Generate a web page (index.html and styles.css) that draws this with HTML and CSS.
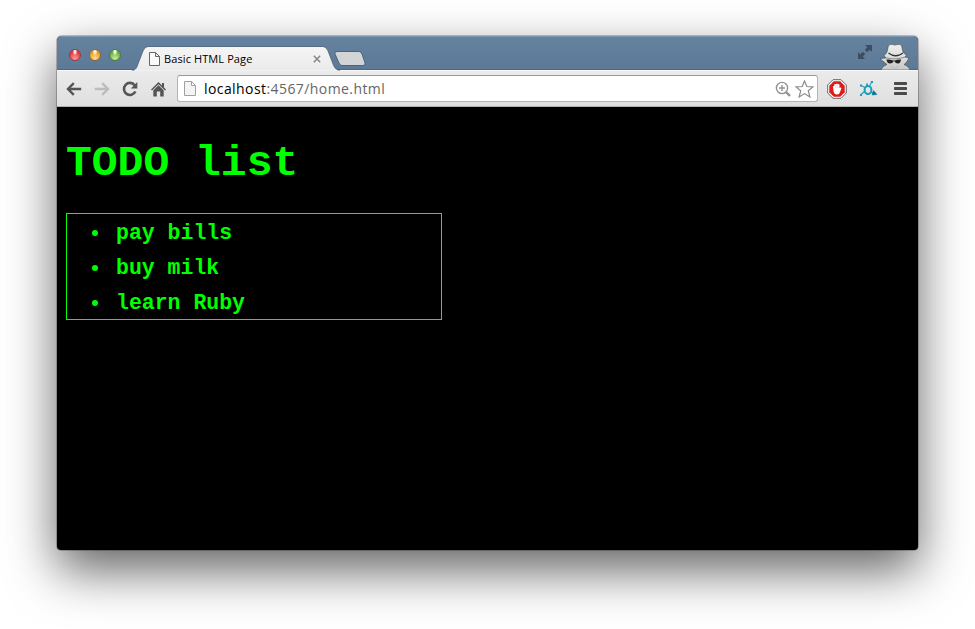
FILE: index.html
```html
<!DOCTYPE html>
<html lang="en">
<head>
<meta charset="utf-8">
<title>Basic HTML Page</title>
<link rel="stylesheet" href="styles.css">
</head>
<body>
<div class="window">
  <header class="tabstrip">
    <div class="lights"><i class="light red"></i><i class="light amber"></i><i class="light green"></i></div>
    <div class="tab">
      <svg class="tab-shape" width="208" height="25" viewBox="0 0 208 25"><defs><linearGradient id="tabfill" x2="0" y2="1"><stop stop-color="#f5f5f5"/><stop offset="1" stop-color="#ebebeb"/></linearGradient></defs><path d="M0 24.5C4 24 5 21 6 18L11 5Q13 .8 16 .8H191Q194 .8 196 5L201 18Q203 24 208 24.5Z" fill="url(#tabfill)"/><path d="M0 24.5C4 24 5 21 6 18L11 5Q13 .5 16 .5H191Q194 .5 196 5L201 18Q203 24 208 24.5" fill="none" stroke="#3f5369" stroke-opacity=".65"/></svg>
      <svg class="tab-icon" width="11" height="14" viewBox="0 0 11 14" fill="#fafafa" stroke="#666"><path d="M.5.5H6.5L10.5 4.5V13.5H.5ZM6.5.5V4.5H10.5"/></svg>
      <span class="tab-title">Basic HTML Page</span>
      <svg class="close" width="8" height="8" viewBox="0 0 8 8" stroke="#858585" stroke-width="1.5"><path d="M.8.8L7.2 7.2M7.2.8L.8 7.2"/></svg>
    </div>
    <svg class="newtab" width="32" height="15" viewBox="0 0 32 15"><path d="M3 .5H25Q27 .5 28 3L31 12Q31.6 14.5 29 14.5H8Q6 14.5 5 12L1 3Q0 .5 3 .5Z" fill="#d2d4d6" stroke="#4d647d"/></svg>
    <svg class="expand" width="16" height="16" viewBox="0 0 16 16"><path d="M8 1H15V8L12.8 5.8L10 8.2L7.8 6L10.2 3.2ZM1 8L3.2 10.2L6 7.8L8.2 10L5.8 12.8L8 15H1Z" fill="#3c4e61"/></svg>
    <svg class="spy" width="34" height="28" viewBox="0 0 34 28"><defs><linearGradient id="spyfill" x2="0" y2="1"><stop stop-color="#f0f0f0"/><stop offset="1" stop-color="#c8c8c8"/></linearGradient></defs><path d="M3 28Q4 24 9 22.5L7 21L2 16.5L8 16L6 13.5Q8 12 9 10L10.5 3.5Q12 1.5 17 3Q22 1.5 23.5 3.5L25 10Q26.5 12 28.5 13L27 15L31 16L28 21L26 22.5Q31 24 32 28Z" fill="url(#spyfill)" stroke="#3d4045" stroke-opacity=".55"/><path d="M10.5 11Q17.5 16.5 25 11" fill="none" stroke="#333" stroke-width="1.3"/><path d="M7 15.5Q17 18.5 27 15" fill="none" stroke="#777" stroke-width=".8"/><path d="M8.5 17.5Q12 17 15 18.5H17Q20 17 23 17.5Q22.5 21.5 20 21.5Q17.5 21.5 16.5 19.3H15.7Q14.5 21.5 12 21.5Q9 21.5 8.5 17.5Z" fill="#222"/><path d="M12 24L16.5 26.5L21 24" fill="none" stroke="#bbb"/></svg>
  </header>
  <nav class="toolbar">
    <svg class="back" width="16" height="14" viewBox="0 0 16 14" fill="none" stroke="#555" stroke-width="2.4"><path d="M15.2 7H2M7.8 1.2L2 7L7.8 12.8"/></svg>
    <svg class="forward" width="16" height="14" viewBox="0 0 16 14" fill="none" stroke="#bcbcbc" stroke-width="2.4"><path d="M.8 7H14M8.2 1.2L14 7L8.2 12.8"/></svg>
    <svg class="reload" width="16" height="16" viewBox="0 0 16 16"><path d="M12.7 4.2A6 6 0 1 0 13.4 10.5" fill="none" stroke="#555" stroke-width="2.6"/><path d="M15.3 1V7.5H8.8Z" fill="#555"/></svg>
    <svg class="home" width="15" height="16" viewBox="0 0 15 16" fill="#555"><path d="M7.5 1L11 4.5V2H13V6.5L15 8.5L14 9.5L7.5 3.2L1 9.5L0 8.5Z"/><path d="M2.3 9.2L7.5 4.2L12.7 9.2V15.5H9.2V10.5H5.8V15.5H2.3Z"/></svg>
    <div class="omnibox">
      <svg class="page-icon" width="12" height="15" viewBox="0 0 12 15" fill="#f4f4f4" stroke="#a0a0a0"><path d="M.5.5H7.5L11.5 4.5V14.5H.5ZM7.5.5V4.5H11.5"/></svg>
      <span class="url"><b>localhost</b>:4567/home.html</span>
      <svg class="magnify" width="16" height="16" viewBox="0 0 16 16" fill="none" stroke="#929292"><circle cx="7" cy="7" r="5.6" stroke-width="1.4"/><path d="M4 7H10M7 4V10" stroke-width="1.4"/><path d="M11 11L15 15" stroke-width="2.4"/></svg>
      <svg class="star" width="19" height="18" viewBox="0 0 19 18" fill="#fff" stroke="#8a8a8a" stroke-width="1.2"><path d="M9.5 1L11.8 6.5L18 6.9L13.3 10.8L14.9 17L9.5 13.6L4.1 17L5.7 10.8L1 6.9L7.2 6.5Z"/></svg>
    </div>
    <svg class="block" width="20" height="20" viewBox="0 0 20 20"><path d="M6 .7H14L19.3 6V14L14 19.3H6L.7 14V6Z" fill="#fff" stroke="#666"/><path d="M6.7 2.3H13.3L17.7 6.7V13.3L13.3 17.7H6.7L2.3 13.3V6.7Z" fill="#dd1c1a"/><path d="M6 8Q6 6.5 7.2 7V5.5Q8.2 4.5 9 5.5Q9.8 3.5 10.8 5.2Q12 4.5 12.5 6V9Q14 7.8 14.5 9L12.7 14Q11.8 15.5 10 15.5Q7.5 15.5 6.7 13Z" fill="#fff"/><path d="M9 6V9M10.8 6V9" stroke="#efb0ad" stroke-width=".5"/></svg>
    <svg class="bug" width="19" height="17" viewBox="0 0 19 17" fill="none" stroke="#1a9dbd"><ellipse cx="9" cy="10" rx="3.4" ry="4" stroke-width="2"/><path d="M10.5 6L12.5 2.5M6 7.5L2 5.5M5.5 11.5L2 14.5M12 12L16 14" stroke-width="1.1"/><path d="M11.8 2H14M1 5.5H3M1 15H3M8 3.5V6" stroke-width="1.8"/><path d="M14.5 10.5L18 14.5L13 15Z" fill="#0b7293" stroke="#0b7293" stroke-width=".5"/></svg>
    <svg class="menu" width="13" height="13" viewBox="0 0 13 13" fill="#4b4b4b"><rect width="13" height="3" rx=".7"/><rect y="5" width="13" height="3" rx=".7"/><rect y="10" width="13" height="3" rx=".7"/></svg>
  </nav>
  <main class="page">
    <h1>TODO list</h1>
    <ul>
      <li>pay bills</li>
      <li>buy milk</li>
      <li>learn Ruby</li>
    </ul>
  </main>
</div>
</body>
</html>
```
FILE: styles.css
```css
* { box-sizing: border-box; }
body { margin: 0; height: 629px; padding: 36px 57px 79px; background: #fff; overflow: hidden; }
.window {
  width: 861px; height: 514px; display: flex; flex-direction: column;
  border-radius: 5px 5px 4px 4px; overflow: hidden; background: #000;
  box-shadow: 0 0 0 1px rgba(0, 0, 0, .22), 0 20px 50px rgba(0, 0, 0, .62);
}
svg { display: block; flex: none; }
.tabstrip {
  height: 34px; flex: none; display: flex; align-items: flex-start;
  background: linear-gradient(#65829f, #5c7997);
  box-shadow: inset 0 1px #7d97b0, inset 0 -1px #4f6882;
}
.lights { display: flex; gap: 8px; padding: 13px 0 0 12px; width: 75px; }
.light { width: 12px; height: 12px; border-radius: 50%; border: 1px solid; }
.red { background: radial-gradient(ellipse at 50% 15%, #ffe1df 0 12%, transparent 35%), radial-gradient(circle at 50% 85%, #ff9c98, #df3c40 65%); border-color: #9b3b42; }
.amber { background: radial-gradient(ellipse at 50% 15%, #fff3d8 0 12%, transparent 35%), radial-gradient(circle at 50% 85%, #ffe487, #e69b35 65%); border-color: #936636; }
.green { background: radial-gradient(ellipse at 50% 15%, #eeffdd 0 12%, transparent 35%), radial-gradient(circle at 50% 85%, #c8f58d, #69ad49 65%); border-color: #507942; }
.tab { position: relative; width: 208px; height: 25px; margin-top: 10px; display: flex; align-items: center; padding: 0 12px 0 17px; }
.tab-shape { position: absolute; left: 0; top: 0; }
.tab-icon, .tab-title, .close { position: relative; }
.tab-title { margin-left: 4px; flex: 1; font: 11px/14px "Open Sans", "Noto Sans", sans-serif; letter-spacing: .1px; color: #000; white-space: nowrap; }
.close { margin-right: 7px; }
.newtab { margin: 15px 0 0 -6px; }
.expand { margin: 8px 5px 0 auto; }
.spy { margin: 6px 6px 0 0; }
.toolbar {
  height: 37px; flex: none; display: flex; align-items: center; padding: 0 11px 0 9px;
  background: linear-gradient(#ebebeb, #dfdfdf);
  border-top: 1px solid #f8f8f8; border-bottom: 1px solid #b0b0b0;
}
.forward { margin-left: 12px; }
.reload { margin-left: 12px; }
.home { margin-left: 13px; }
.omnibox {
  margin-left: 11px; width: 641px; height: 27px; display: flex; align-items: center; padding: 0 3px 0 6px;
  background: #fff; border: 1px solid #b4b4b4; border-top-color: #989898; border-radius: 3px;
}
.url { margin-left: 8px; flex: 1; font: 14px/20px "Open Sans", "Noto Sans", sans-serif; letter-spacing: .42px; color: #666; white-space: nowrap; }
.url b { font-weight: 400; color: #000; }
.star { margin-left: 4px; }
.block { margin-left: 9px; }
.bug { margin-left: 12px; }
.menu { margin-left: auto; }
.page { flex: 1; padding: 32px 9px 0; color: #0f0; font-family: "Liberation Mono", monospace; font-weight: 700; }
h1 { margin: 0; font-size: 43px; line-height: 50px; }
ul { margin: 24px 0 0; width: 376px; height: 107px; border: 1px solid #0f0; padding: 2px 0 0 49px; font-size: 21.5px; line-height: 35px; list-style: none; }
li { display: flex; align-items: center; }
li::before { content: ""; width: 6px; height: 6px; border-radius: 50%; background: #0f0; margin: 0 18px 1px -24px; }
```
